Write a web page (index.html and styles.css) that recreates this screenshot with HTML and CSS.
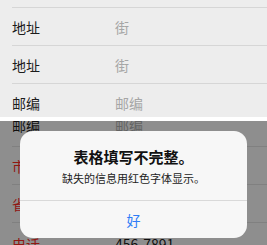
FILE: index.html
```html
<!DOCTYPE html>
<html lang="zh-CN">
<head>
    <meta charset="UTF-8">
    <meta name="viewport" content="width=device-width, initial-scale=1.0">
    <title>表格</title>
    <link rel="stylesheet" href="styles.css">
</head>
<body>
    <div class="panel top">
        <div class="spacer"></div>
        <div class="row"><span class="label">地址</span><span class="value">街</span></div>
        <div class="row"><span class="label">地址</span><span class="value">街</span></div>
        <div class="row"><span class="label">邮编</span><span class="value">邮编</span></div>
        <div class="row"><span class="label">城市</span><span class="value">城市</span></div>
    </div>
    <div class="strip"></div>
    <div class="panel dimmed">
        <div class="rows">
            <div class="row first"><span class="label">邮编</span><span class="value">邮编</span></div>
            <div class="row"><span class="label missing">市</span><span class="value">城市</span></div>
            <div class="row"><span class="label missing">省</span><span class="value">省份</span></div>
            <div class="row last"><span class="label missing">电话</span><span class="value filled">456-7891</span></div>
        </div>
        <div class="overlay"></div>
        <div class="alert">
            <div class="alert-body">
                <div class="alert-title">表格填写不完整。</div>
                <div class="alert-message">缺失的信息用红色字体显示。</div>
            </div>
            <button class="alert-button">好</button>
        </div>
    </div>
</body>
</html>
```

FILE: styles.css
```css
html, body {
    margin: 0;
    padding: 0;
    width: 267px;
    height: 245px;
    overflow: hidden;
    background: #ffffff;
    font-family: "Noto Sans CJK SC", "Noto Sans", sans-serif;
}
.panel {
    background: #ededed;
    overflow: hidden;
}
.top {
    height: 117px;
}
.spacer {
    height: 7px;
}
.strip {
    height: 4px;
    background: #ffffff;
}
.dimmed {
    position: relative;
    height: 124px;
}
.rows {
    margin-top: -13px;
}
.row {
    display: flex;
    align-items: center;
    height: 37px;
    margin-left: 12px;
    border-top: 1px solid #d6d6d6;
    font-size: 14px;
}
.row.first {
    height: 31px;
    padding-bottom: 6px;
}
.row.last {
    height: 41px;
}
.label {
    width: 103px;
    color: #1c1c1c;
}
.label.missing {
    color: #f0281e;
}
.value {
    color: #a6a6a6;
}
.value.filled {
    color: #1c1c1c;
}
.overlay {
    position: absolute;
    inset: 0;
    background: rgba(0, 0, 0, 0.4);
}
.alert {
    position: absolute;
    left: 20px;
    top: 10px;
    width: 227px;
    height: 107px;
    background: #f7f7f7;
    border-radius: 13px;
    display: flex;
    flex-direction: column;
    overflow: hidden;
}
.alert-body {
    height: 70px;
    border-bottom: 1px solid #d9d9d9;
    text-align: center;
    box-sizing: border-box;
    padding-top: 16px;
}
.alert-title {
    font-size: 15px;
    font-weight: bold;
    color: #111111;
    line-height: 20px;
}
.alert-message {
    font-size: 11px;
    color: #222222;
    line-height: 16px;
    margin-top: 3px;
}
.alert-button {
    flex: 1;
    border: none;
    background: none;
    font-family: inherit;
    font-size: 14px;
    color: #2f7df6;
    padding: 0;
}
```
